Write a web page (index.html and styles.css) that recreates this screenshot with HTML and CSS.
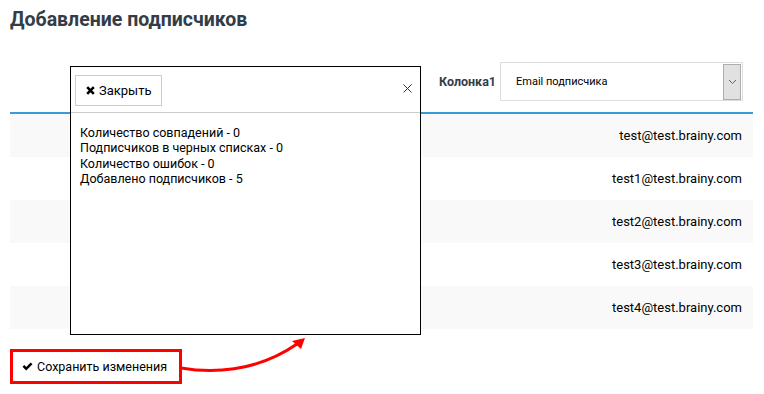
FILE: index.html
```html
<!DOCTYPE html>
<html lang="ru">
<head>
    <meta charset="UTF-8">
    <title>Добавление подписчиков</title>
    <link rel="stylesheet" href="styles.css">
</head>
<body>
    <div class="page">
        <h1 class="title">Добавление подписчиков</h1>

        <div class="toolbar">
            <span class="column-label">Колонка1</span>
            <div class="select">
                <span class="select-value">Email подписчика</span>
                <span class="select-arrow">
                    <svg width="9" height="6" viewBox="0 0 9 6"><path d="M1 1 L4.5 4.5 L8 1" fill="none" stroke="#666" stroke-width="1"/></svg>
                </span>
            </div>
        </div>

        <div class="table">
            <div class="row">test@test.brainy.com</div>
            <div class="row">test1@test.brainy.com</div>
            <div class="row">test2@test.brainy.com</div>
            <div class="row">test3@test.brainy.com</div>
            <div class="row">test4@test.brainy.com</div>
        </div>

        <button class="save-btn">
            <svg class="icon" width="11" height="9" viewBox="0 0 11 9"><path d="M0.5 4.8 L2.3 3 L4.2 4.9 L8.7 0.4 L10.5 2.2 L4.2 8.5 Z" fill="#000"/></svg>
            Сохранить изменения
        </button>

        <!-- result popup -->
        <div class="modal">
            <div class="modal-header">
                <button class="close-btn">
                    <svg class="icon" width="9" height="9" viewBox="0 0 9 9"><path d="M1.2 1.2 L7.8 7.8 M7.8 1.2 L1.2 7.8" stroke="#000" stroke-width="2.6"/></svg>
                    Закрыть
                </button>
                <svg class="modal-x" width="9" height="9" viewBox="0 0 9 9"><path d="M0.5 0.5 L8.5 8.5 M8.5 0.5 L0.5 8.5" stroke="#333" stroke-width="1"/></svg>
            </div>
            <div class="modal-body">
                <div>Количество совпадений - 0</div>
                <div>Подписчиков в черных списках - 0</div>
                <div>Количество ошибок - 0</div>
                <div>Добавлено подписчиков - 5</div>
            </div>
        </div>

        <svg class="pointer" width="140" height="50" viewBox="0 0 140 50">
            <path d="M1 33 C 30 38, 75 38, 117 9" fill="none" stroke="#f00" stroke-width="3"/>
            <path d="M125 3 L112 6 L121 14 Z" fill="#f00"/>
        </svg>
    </div>
</body>
</html>
```

FILE: styles.css
```css
body {
    margin: 0;
    font-family: Roboto, "Liberation Sans", sans-serif;
    color: #000;
    background: #fff;
}

.page {
    position: relative;
    padding: 0 11px 0 10px;
}

.title {
    margin: 0;
    padding-top: 10px;
    font-size: 19.5px;
    line-height: 20px;
    font-weight: bold;
    color: #333d47;
}

.toolbar {
    display: flex;
    justify-content: flex-end;
    align-items: center;
    gap: 4px;
    margin-top: 32px;
    padding-right: 10px;
}

.column-label {
    font-size: 12.5px;
    font-weight: bold;
    color: #333d47;
}

.select {
    width: 241px;
    height: 37px;
    border: 1px solid #ddd;
    display: flex;
    align-items: center;
    justify-content: space-between;
}

.select-value {
    font-size: 11px;
    padding-left: 15px;
}

.select-arrow {
    width: 16px;
    height: 34px;
    margin-right: 1px;
    background: #e1e1e1;
    border: 1px solid #adadad;
    display: flex;
    align-items: center;
    justify-content: center;
}

.table {
    margin-top: 11px;
    border-top: 2px solid #3a9ad9;
}

.row {
    height: 43px;
    line-height: 43px;
    text-align: right;
    padding-right: 11px;
    font-size: 13px;
}

.row:nth-child(odd) {
    background: #f9f9f9;
}

.save-btn {
    margin-top: 20px;
    width: 172px;
    height: 35px;
    border: 3px solid #f00;
    background: #fff;
    font-family: inherit;
    font-size: 12.5px;
    color: #000;
    padding: 0 0 0 9px;
    display: flex;
    align-items: center;
    gap: 4px;
}

.modal {
    position: absolute;
    left: 70px;
    top: 66px;
    width: 349px;
    height: 267px;
    border: 1px solid #000;
    background: #fff;
}

.modal-header {
    display: flex;
    justify-content: space-between;
    align-items: flex-start;
    padding: 8px 8px 6px 4px;
    border-bottom: 1px solid #ccc;
}

.close-btn {
    width: 87px;
    height: 31px;
    border: 1px solid #ccc;
    background: #fff;
    font-family: inherit;
    font-size: 13px;
    color: #000;
    padding: 0 0 0 10px;
    display: flex;
    align-items: center;
    gap: 4px;
}

.modal-x {
    margin-top: 9px;
}

.modal-body {
    padding: 12px 9px;
    font-size: 12.5px;
    line-height: 15.3px;
}

.pointer {
    position: absolute;
    left: 180px;
    top: 335px;
}
```
